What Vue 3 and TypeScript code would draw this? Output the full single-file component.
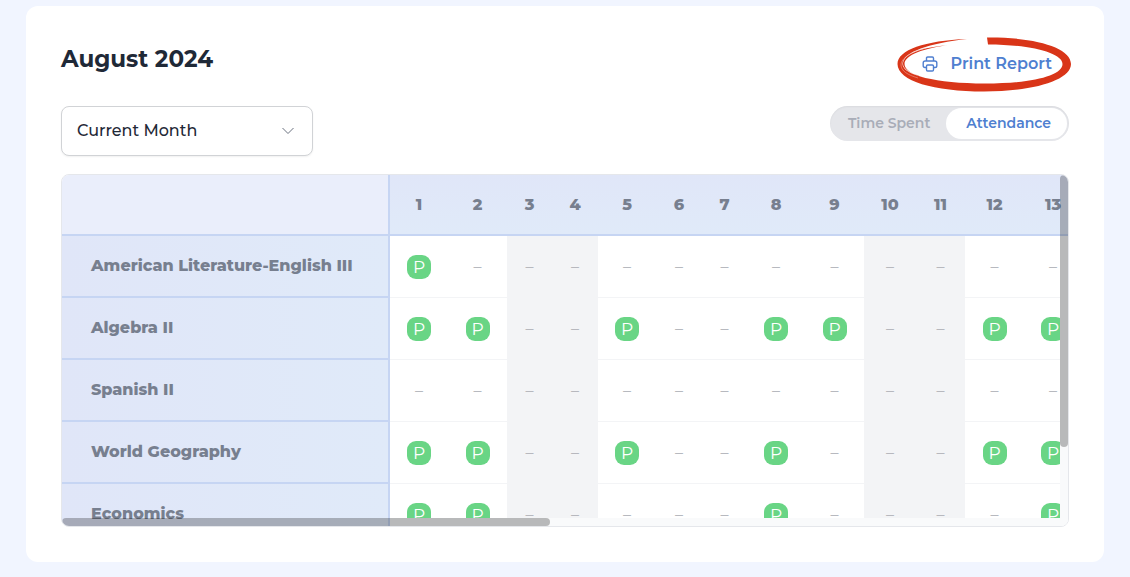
<script setup lang="ts">
import { ref } from 'vue'

interface Day {
  label: number
  width: number
  weekend: boolean
}

interface Course {
  name: string
  present: number[]
}

const period = ref('current')
const view = ref<'time' | 'attendance'>('attendance')

const days: Day[] = [
  { label: 1, width: 58, weekend: false },
  { label: 2, width: 59, weekend: false },
  { label: 3, width: 45, weekend: true },
  { label: 4, width: 46, weekend: true },
  { label: 5, width: 58, weekend: false },
  { label: 6, width: 46, weekend: false },
  { label: 7, width: 45, weekend: false },
  { label: 8, width: 58, weekend: false },
  { label: 9, width: 59, weekend: false },
  { label: 10, width: 52, weekend: true },
  { label: 11, width: 49, weekend: true },
  { label: 12, width: 59, weekend: false },
  { label: 13, width: 58, weekend: false },
]

const courses: Course[] = [
  { name: 'American Literature-English III', present: [1] },
  { name: 'Algebra II', present: [1, 2, 5, 8, 9, 12, 13] },
  { name: 'Spanish II', present: [] },
  { name: 'World Geography', present: [1, 2, 5, 8, 12, 13] },
  { name: 'Economics', present: [1, 2, 8, 13] },
]
</script>

<template>
  <main class="page">
    <section class="card">
      <header class="heading">
        <h1>August 2024</h1>
        <button type="button" class="print">
          <svg class="printer" viewBox="0 0 16 16" aria-hidden="true">
            <path d="M4.5 5V2.2Q4.5 1 5.7 1H10.3Q11.5 1 11.5 2.2V5" />
            <path d="M4.5 11.5H3Q1.2 11.5 1.2 9.7V7Q1.2 5 3.2 5H12.8Q14.8 5 14.8 7V9.7Q14.8 11.5 13 11.5H11.5" />
            <rect x="4.5" y="9" width="7" height="6" rx="1.2" />
          </svg>
          <span>Print Report</span>
          <svg class="ring" viewBox="0 0 176 56" aria-hidden="true">
            <path
              class="ring-body"
              d="M91 1.5C137 1 175 11 175 28C175 44 138 55.500 88 55.500C38 55.500 1.500 45 1.500 28C1.500 14 29 4.500 71 3C34 7 6.500 16 6.500 28C6.500 39 40 47.500 89 47.500C135 47.500 166.500 40 166.500 28C166.500 17 134 8.500 92 8.500Z"
            />
            <path class="ring-streak" d="M54 9C28 12 8.500 19 8.500 28C8.500 34 17 39 30 42C15 38 7 33 7 28C7 18 26 11 54 9Z" />
            <path class="ring-gap" d="M30 12C15 16 5 22 5 29C5 35 12 39 22 42" />
          </svg>
        </button>
      </header>

      <div class="controls">
        <div class="period">
          <select v-model="period" aria-label="Reporting period">
            <option value="current">Current Month</option>
          </select>
          <svg class="chevron" viewBox="0 0 14 8" aria-hidden="true">
            <path d="M1.5 1L7 6.5L12.5 1" />
          </svg>
        </div>
        <div class="switch" role="group" aria-label="Report type">
          <button type="button" :class="{ active: view === 'time' }" :aria-pressed="view === 'time'" @click="view = 'time'">
            Time Spent
          </button>
          <button
            type="button"
            :class="{ active: view === 'attendance' }"
            :aria-pressed="view === 'attendance'"
            @click="view = 'attendance'"
          >
            Attendance
          </button>
        </div>
      </div>

      <div class="frame">
        <div class="scroller">
          <table>
            <colgroup>
              <col class="name-col" />
              <col v-for="day in days" :key="day.label" :style="{ width: day.width + 'px' }" />
            </colgroup>
            <thead>
              <tr>
                <td class="corner"></td>
                <th v-for="day in days" :key="day.label" scope="col">{{ day.label }}</th>
              </tr>
            </thead>
            <tbody>
              <tr v-for="course in courses" :key="course.name">
                <th scope="row">{{ course.name }}</th>
                <td v-for="day in days" :key="day.label" :class="{ weekend: day.weekend }">
                  <span v-if="course.present.includes(day.label)" class="badge">P</span>
                  <span v-else class="none">–</span>
                </td>
              </tr>
            </tbody>
          </table>
        </div>
        <div class="track-y"></div>
        <div class="track-x"></div>
        <div class="thumb-y"></div>
        <div class="thumb-x"></div>
      </div>
    </section>
  </main>
</template>

<style>
body {
  margin: 0;
  background: #f1f5ff;
}
</style>

<style scoped>
.page {
  box-sizing: border-box;
  min-height: 100vh;
  padding: 6px 26px 15px;
  background: #f1f5ff;
  color: #1f2937;
  font-family: Montserrat, Inter, "Liberation Sans", sans-serif;
}

.page button,
.page select {
  margin: 0;
  font-family: inherit;
  cursor: pointer;
}

.card {
  padding: 30px 35px 35px;
  border-radius: 12px;
  background: #fff;
}

.heading {
  display: flex;
  align-items: center;
  justify-content: space-between;
  height: 46px;
}

h1 {
  margin: 0;
  font-size: 23px;
  line-height: 32px;
  font-weight: 700;
}

.print {
  position: relative;
  display: flex;
  align-items: center;
  align-self: flex-end;
  gap: 13px;
  height: 36px;
  padding: 0 17px 0 18px;
  border: 0;
  background: transparent;
  color: #4f7fd0;
  font-size: 16px;
  line-height: 26px;
  font-weight: 600;
}

.printer {
  width: 16px;
  height: 16px;
  fill: none;
  stroke: currentColor;
  stroke-width: 1.4;
  stroke-linejoin: round;
}

.printer rect {
  fill: #fff;
}

.ring {
  position: absolute;
  top: -10px;
  right: -3px;
  width: 176px;
  height: 56px;
  pointer-events: none;
}

.ring-body,
.ring-streak {
  fill: #d93518;
}

.ring-gap {
  fill: none;
  stroke: #f3b5a8;
  stroke-width: 0.5;
}

.controls {
  display: flex;
  align-items: flex-start;
  justify-content: space-between;
  margin-top: 24px;
}

.period {
  position: relative;
  width: 252px;
}

.period select {
  display: block;
  box-sizing: border-box;
  width: 100%;
  height: 50px;
  padding: 0 40px 1px 15px;
  border: 1px solid #d1d3d6;
  border-radius: 8px;
  appearance: none;
  background: #fff;
  box-shadow: 0 1px 2px rgba(0, 0, 0, 0.06);
  color: #1f2937;
  font-size: 16px;
  font-weight: 500;
}

.chevron {
  position: absolute;
  top: 21px;
  right: 18px;
  width: 14px;
  height: 8px;
  fill: none;
  stroke: #6b7280;
  stroke-width: 1;
  pointer-events: none;
}

.switch {
  display: flex;
  padding: 2px;
  border-radius: 18px;
  background: #e5e6ea;
  box-shadow: inset 0 1px 2px rgba(0, 0, 0, 0.05);
}

.switch button {
  height: 31px;
  padding: 0 16px 2px;
  border: 0;
  border-radius: 16px;
  background: transparent;
  color: #a9adb8;
  font-size: 14px;
  line-height: 20px;
  font-weight: 600;
}

.switch .active {
  padding: 0 16px 2px 20px;
  background: #fff;
  color: #4f7fd0;
}

.frame {
  position: relative;
  margin-top: 18px;
  border: 1px solid #e5e7eb;
  border-radius: 8px;
  overflow: hidden;
}

.scroller {
  max-height: 351px;
  overflow: auto;
  scrollbar-width: none;
}

table {
  width: 1020px;
  border-collapse: separate;
  border-spacing: 0;
  table-layout: fixed;
}

.name-col {
  width: 328px;
}

th,
td {
  box-sizing: border-box;
  height: 62px;
  padding: 0;
  text-align: center;
  vertical-align: middle;
}

thead th,
.corner {
  position: sticky;
  top: 0;
  height: 61px;
  border-bottom: 2px solid #c6d5f3;
}

thead th {
  background: linear-gradient(#e0e6f8, #e0eaf9);
}

.corner {
  border-right: 2px solid #c6d5f3;
  background: #eaeefb;
}

th {
  color: #777f8f;
  font-size: 16px;
  line-height: 24px;
  font-weight: 800;
}

tbody th {
  padding-left: 29px;
  border-right: 2px solid #c6d5f3;
  border-bottom: 2px solid #c6d5f3;
  background: linear-gradient(90deg, #e0e6f8, #e0eaf9);
  text-align: left;
  white-space: nowrap;
}

tbody td {
  border-bottom: 1px solid #f3f4f6;
  font-size: 16px;
  line-height: 24px;
}

.weekend {
  background: #f3f4f6;
}

.badge {
  display: block;
  width: 24px;
  height: 24px;
  margin: 0 auto;
  border-radius: 9px;
  background: #69d585;
  color: #fff;
  font-size: 17px;
  font-weight: 400;
}

.none {
  color: #b3b5bb;
  font-weight: 400;
}

.track-y,
.track-x,
.thumb-y,
.thumb-x {
  position: absolute;
  right: 0;
  bottom: 0;
  pointer-events: none;
}

.track-y {
  top: 61px;
  width: 8px;
  background: #f9fafb;
}

.track-x {
  left: 328px;
  height: 8px;
  background: #f9fafb;
}

.thumb-y {
  top: 0;
  bottom: auto;
  width: 8px;
  height: 272px;
  border-radius: 4px;
  background: rgba(0, 0, 0, 0.26);
}

.thumb-x {
  right: auto;
  left: 0;
  width: 488px;
  height: 8px;
  border-radius: 4px;
  background: rgba(0, 0, 0, 0.26);
}
</style>
